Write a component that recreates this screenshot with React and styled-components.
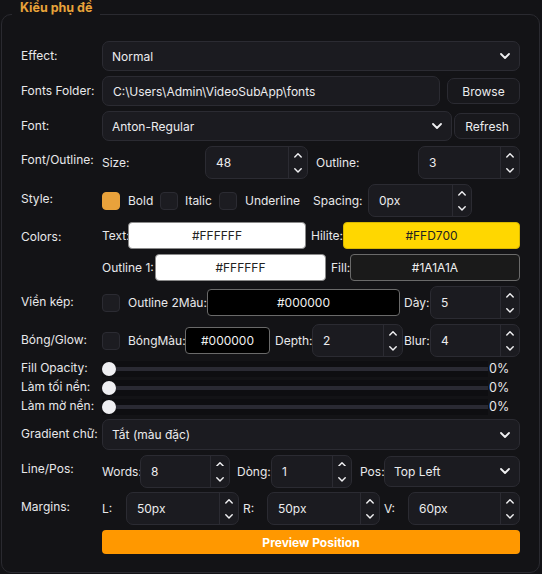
import React from "react";
import styled, { createGlobalStyle } from "styled-components";

const Global = createGlobalStyle`
  html, body { margin: 0; padding: 0; background: #131316; }
  body {
    font-family: Inter, "Noto Sans", "Liberation Sans", sans-serif;
    font-size: 12px;
    color: #e8e8ea;
    width: 542px;
    height: 574px;
    overflow: hidden;
  }
`;

const Group = styled.section`
  position: relative;
  box-sizing: border-box;
  height: 559px;
  margin: 14px 2px 0 1px;
  border: 1px solid #2a2a30;
  border-radius: 10px;
  padding: 26px 19px 0 19px;
`;

const Legend = styled.div`
  position: absolute;
  top: -15px;
  left: 10px;
  padding: 0 8px;
  line-height: 16px;
  background: #131316;
  color: #e8a33a;
  font-weight: 700;
  font-size: 12.5px;
`;

const Form = styled.div`
  display: flex;
  flex-direction: column;
  gap: 5px;
`;

const Row = styled.div`
  display: grid;
  grid-template-columns: 81px 1fr;
  min-height: ${(p) => p.$h || 30}px;
`;

const Label = styled.div`
  display: flex;
  align-items: ${(p) => (p.$top ? "flex-start" : "center")};
  padding-top: ${(p) => (p.$top ? "7px" : "0")};
  padding-bottom: ${(p) => (p.$top ? "0" : p.$up || 2)}px;
  white-space: nowrap;
`;

const Line = styled.div`
  display: flex;
  align-items: center;
  gap: ${(p) => p.$gap || 0}px;
  height: ${(p) => p.$h || 30}px;
`;

const Stack = styled.div`
  display: flex;
  flex-direction: column;
  gap: 5px;
`;

const Text = styled.span`
  box-sizing: border-box;
  white-space: nowrap;
  width: ${(p) => (p.$w ? `${p.$w}px` : "auto")};
  padding-left: ${(p) => p.$pl || 0}px;
  flex: none;
`;

const Field = styled.div`
  box-sizing: border-box;
  display: flex;
  align-items: center;
  background: #1b1b20;
  border: 1px solid #2b2b32;
  border-radius: 7px;
  height: ${(p) => p.$h || 30}px;
  width: ${(p) => (p.$w ? `${p.$w}px` : "auto")};
  flex: ${(p) => (p.$w ? "none" : "1")};
  color: #ececee;
`;

const ComboBox = styled(Field)`
  padding: 0 9px 0 9px;
  justify-content: space-between;
`;

const TextBox = styled(Field)`
  padding: 0 10px;
`;

const PlainButton = styled.button`
  box-sizing: border-box;
  height: 26px;
  width: ${(p) => p.$w}px;
  flex: none;
  background: #18181c;
  border: 1px solid #2b2b32;
  border-radius: 7px;
  color: #ececee;
  font: inherit;
  padding: 0;
`;

const SpinWrap = styled(Field)`
  height: 33px;
  align-items: stretch;
`;

const SpinValue = styled.div`
  flex: 1;
  display: flex;
  align-items: center;
  padding-left: 10px;
`;

const SpinArrows = styled.div`
  width: 18px;
  border-left: 1px solid #2b2b32;
  display: flex;
  flex-direction: column;
  align-items: center;
  justify-content: space-between;
  padding: 6px 0 5px;
`;

const Swatch = styled.div`
  box-sizing: border-box;
  height: 27px;
  width: ${(p) => (p.$w ? `${p.$w}px` : "auto")};
  flex: ${(p) => (p.$w ? "none" : "1")};
  display: flex;
  align-items: center;
  justify-content: center;
  background: ${(p) => p.$bg};
  color: ${(p) => p.$fg};
  border: 1px solid ${(p) => p.$line || "#8a8a8a"};
  border-radius: 4px;
`;

const Check = styled.div`
  box-sizing: border-box;
  width: 18px;
  height: 18px;
  flex: none;
  border-radius: 4px;
  background: ${(p) => (p.$on ? "#e9a23b" : "#1c1c21")};
  border: 1px solid ${(p) => (p.$on ? "#e9a23b" : "#2b2b32")};
`;

const SliderBlock = styled.div`
  display: flex;
  flex-direction: column;
  margin: -3px 0 -2px;
`;

const SliderRow = styled.div`
  display: grid;
  grid-template-columns: 81px 386px 1fr;
  height: 19px;
  align-items: center;
`;

const Track = styled.div`
  position: relative;
  height: 16px;
  background: #0e0e11;
  display: flex;
  align-items: center;
`;

const Groove = styled.div`
  height: 4px;
  width: 100%;
  background: #2a2a33;
`;

const Handle = styled.div`
  position: absolute;
  left: 0;
  top: 1px;
  width: 14px;
  height: 14px;
  border-radius: 50%;
  background: #efeff2;
`;

const Percent = styled.span`
  padding-left: 1px;
  font-size: 12.5px;
`;

const Primary = styled.button`
  height: 24px;
  width: 100%;
  border: none;
  border-radius: 4px;
  background: #ff9800;
  color: #ffffff;
  font: inherit;
  font-weight: 700;
`;

const Chevron = ({ up, size = 9 }) => (
  <svg width={size} height={size * 0.6} viewBox="0 0 10 6" fill="none">
    <path
      d={up ? "M1 5 L5 1 L9 5" : "M1 1 L5 5 L9 1"}
      stroke="#f0f0f2"
      strokeWidth="1.8"
      strokeLinecap="round"
      strokeLinejoin="round"
    />
  </svg>
);

const Combo = ({ value, w, h }) => (
  <ComboBox $w={w} $h={h}>
    <span>{value}</span>
    <Chevron size={10} />
  </ComboBox>
);

const Spin = ({ value, w }) => (
  <SpinWrap $w={w}>
    <SpinValue>{value}</SpinValue>
    <SpinArrows>
      <Chevron up size={8} />
      <Chevron size={8} />
    </SpinArrows>
  </SpinWrap>
);

const Slider = ({ label }) => (
  <SliderRow>
    <Label>{label}</Label>
    <Track>
      <Groove />
      <Handle />
    </Track>
    <Percent>0%</Percent>
  </SliderRow>
);

export default function App() {
  return (
    <>
      <Global />
      <Group>
        <Legend>Kiểu phụ đề</Legend>
        <Form>
          <Row $h={30}>
            <Label>Effect:</Label>
            <Line>
              <Combo value="Normal" />
            </Line>
          </Row>

          <Row>
            <Label>Fonts Folder:</Label>
            <Line $gap={7}>
              <TextBox>C:\Users\Admin\VideoSubApp\fonts</TextBox>
              <PlainButton $w={73}>Browse</PlainButton>
            </Line>
          </Row>

          <Row>
            <Label>Font:</Label>
            <Line $gap={2}>
              <Combo value="Anton-Regular" />
              <PlainButton $w={66}>Refresh</PlainButton>
            </Line>
          </Row>

          <Row $h={33}>
            <Label $up={6}>Font/Outline:</Label>
            <Line $h={33}>
              <Text $w={103}>Size:</Text>
              <Spin value="48" w={103} />
              <Text $w={8} />
              <Text $w={102}>Outline:</Text>
              <Spin value="3" w={102} />
            </Line>
          </Row>

          <Row $h={33}>
            <Label $up={5}>Style:</Label>
            <Line $h={33}>
              <Check $on />
              <Text $w={40} $pl={8}>Bold</Text>
              <Check />
              <Text $w={41} $pl={7}>Italic</Text>
              <Check />
              <Text $w={76} $pl={8}>Underline</Text>
              <Text $w={55}>Spacing:</Text>
              <Spin value="0px" w={104} />
            </Line>
          </Row>

          <Row>
            <Label $top>Colors:</Label>
            <Stack>
              <Line $h={27}>
                <Text $w={26}>Text:</Text>
                <Swatch $w={178} $bg="#ffffff" $fg="#222">#FFFFFF</Swatch>
                <Text $w={37} $pl={5}>Hilite:</Text>
                <Swatch $bg="#ffd700" $fg="#222" $line="#d9b800">#FFD700</Swatch>
              </Line>
              <Line $h={27}>
                <Text $w={53}>Outline 1:</Text>
                <Swatch $w={171} $bg="#ffffff" $fg="#222">#FFFFFF</Swatch>
                <Text $w={24} $pl={5}>Fill:</Text>
                <Swatch $bg="#1a1a1a" $fg="#f0f0f0" $line="#6a6a6a">#1A1A1A</Swatch>
              </Line>
            </Stack>
          </Row>

          <Row $h={33}>
            <Label>Viền kép:</Label>
            <Line $h={33}>
              <Check />
              <Text $w={87} $pl={8}>Outline 2Màu:</Text>
              <Swatch $w={193} $bg="#000000" $fg="#f0f0f0" $line="#6a6a6a">#000000</Swatch>
              <Text $w={30} $pl={4}>Dày:</Text>
              <Spin value="5" />
            </Line>
          </Row>

          <Row $h={33}>
            <Label>Bóng/Glow:</Label>
            <Line $h={33}>
              <Check />
              <Text $w={65} $pl={8}>BóngMàu:</Text>
              <Swatch $w={85} $bg="#000000" $fg="#f0f0f0" $line="#6a6a6a">#000000</Swatch>
              <Text $w={42} $pl={5}>Depth:</Text>
              <Spin value="2" w={91} />
              <Text $w={27} $pl={1}>Blur:</Text>
              <Spin value="4" />
            </Line>
          </Row>

          <SliderBlock>
            <Slider label="Fill Opacity:" />
            <Slider label="Làm tối nền:" />
            <Slider label="Làm mờ nền:" />
          </SliderBlock>

          <Row $h={31}>
            <Label>Gradient chữ:</Label>
            <Line $h={31}>
              <Combo value="Tắt (màu đặc)" h={31} />
            </Line>
          </Row>

          <Row $h={32}>
            <Label $up={5}>Line/Pos:</Label>
            <Line $h={32}>
              <Text $w={38}>Words:</Text>
              <Spin value="8" w={90} />
              <Text $w={41} $pl={7}>Dòng:</Text>
              <Spin value="1" w={81} />
              <Text $w={32} $pl={8}>Pos:</Text>
              <Combo value="Top Left" h={31} />
            </Line>
          </Row>

          <Row $h={33}>
            <Label $up={5}>Margins:</Label>
            <Line $h={33}>
              <Text $w={24}>L:</Text>
              <Spin value="50px" w={113} />
              <Text $w={28} $pl={4}>R:</Text>
              <Spin value="50px" w={113} />
              <Text $w={28} $pl={4}>V:</Text>
              <Spin value="60px" />
            </Line>
          </Row>

          <Row $h={24}>
            <span />
            <Primary>Preview Position</Primary>
          </Row>
        </Form>
      </Group>
    </>
  );
}
